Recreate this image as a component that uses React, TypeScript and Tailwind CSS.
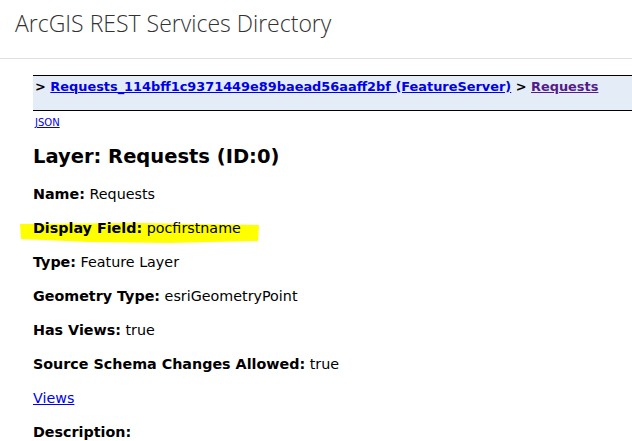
import React from "react";

const rows: { label: string; value: string }[] = [
  { label: "Name:", value: "Requests" },
  { label: "Display Field:", value: "pocfirstname" },
  { label: "Type:", value: "Feature Layer" },
  { label: "Geometry Type:", value: "esriGeometryPoint" },
  { label: "Has Views:", value: "true" },
  { label: "Source Schema Changes Allowed:", value: "true" },
];

const Highlight = () => (
  <svg
    className="absolute left-[-14px] top-[1px] h-[22px] w-[242px]"
    viewBox="0 0 242 22"
    aria-hidden
  >
    <path
      d="M1 3 L120 2 L240 4 L239 20 L150 22 L70 21 L2 18 Z"
      fill="#ffff00"
    />
  </svg>
);

export default function App() {
  return (
    <div className="min-h-[441px] w-[632px] overflow-hidden bg-white font-['DejaVu_Sans',sans-serif] text-black">
      <header className="h-[59px] border-b border-[#e0e0e0] pl-[15px] pt-[7px]">
        <h1 className="font-['Open_Sans',sans-serif] text-[23px] font-light leading-[32px] text-[#323232]">
          ArcGIS REST Services Directory
        </h1>
      </header>

      <main className="pl-[33px]">
        <div className="mt-[16px] h-[36px] w-[640px] border-y border-black bg-[#e4edf7] pl-[2px] pt-[3px] text-[12.9px] font-bold leading-[16px]">
          &gt;{" "}
          <a href="#" className="text-[#0000ee] underline">
            Requests_114bff1c9371449e89baead56aaff2bf (FeatureServer)
          </a>{" "}
          &gt;{" "}
          <a href="#" className="text-[#551a8b] underline">
            Requests
          </a>
        </div>

        <a
          href="#"
          className="mt-[6px] block pl-[2px] text-[10px] leading-[12px] text-[#0000ee] underline"
        >
          JSON
        </a>

        <h2 className="mt-[16px] text-[19.5px] font-bold leading-[24px]">
          Layer: Requests (ID:0)
        </h2>

        <div className="mt-[17px] flex flex-col gap-[17px] text-[14.3px] leading-[17px]">
          {rows.map((r, i) => (
            <div key={r.label} className="relative">
              {i === 1 && <Highlight />}
              <span className="relative">
                <b>{r.label}</b> {r.value}
              </span>
            </div>
          ))}
          <div>
            <a href="#" className="text-[#0000ee] underline">
              Views
            </a>
          </div>
          <b>Description:</b>
        </div>
      </main>
    </div>
  );
}
